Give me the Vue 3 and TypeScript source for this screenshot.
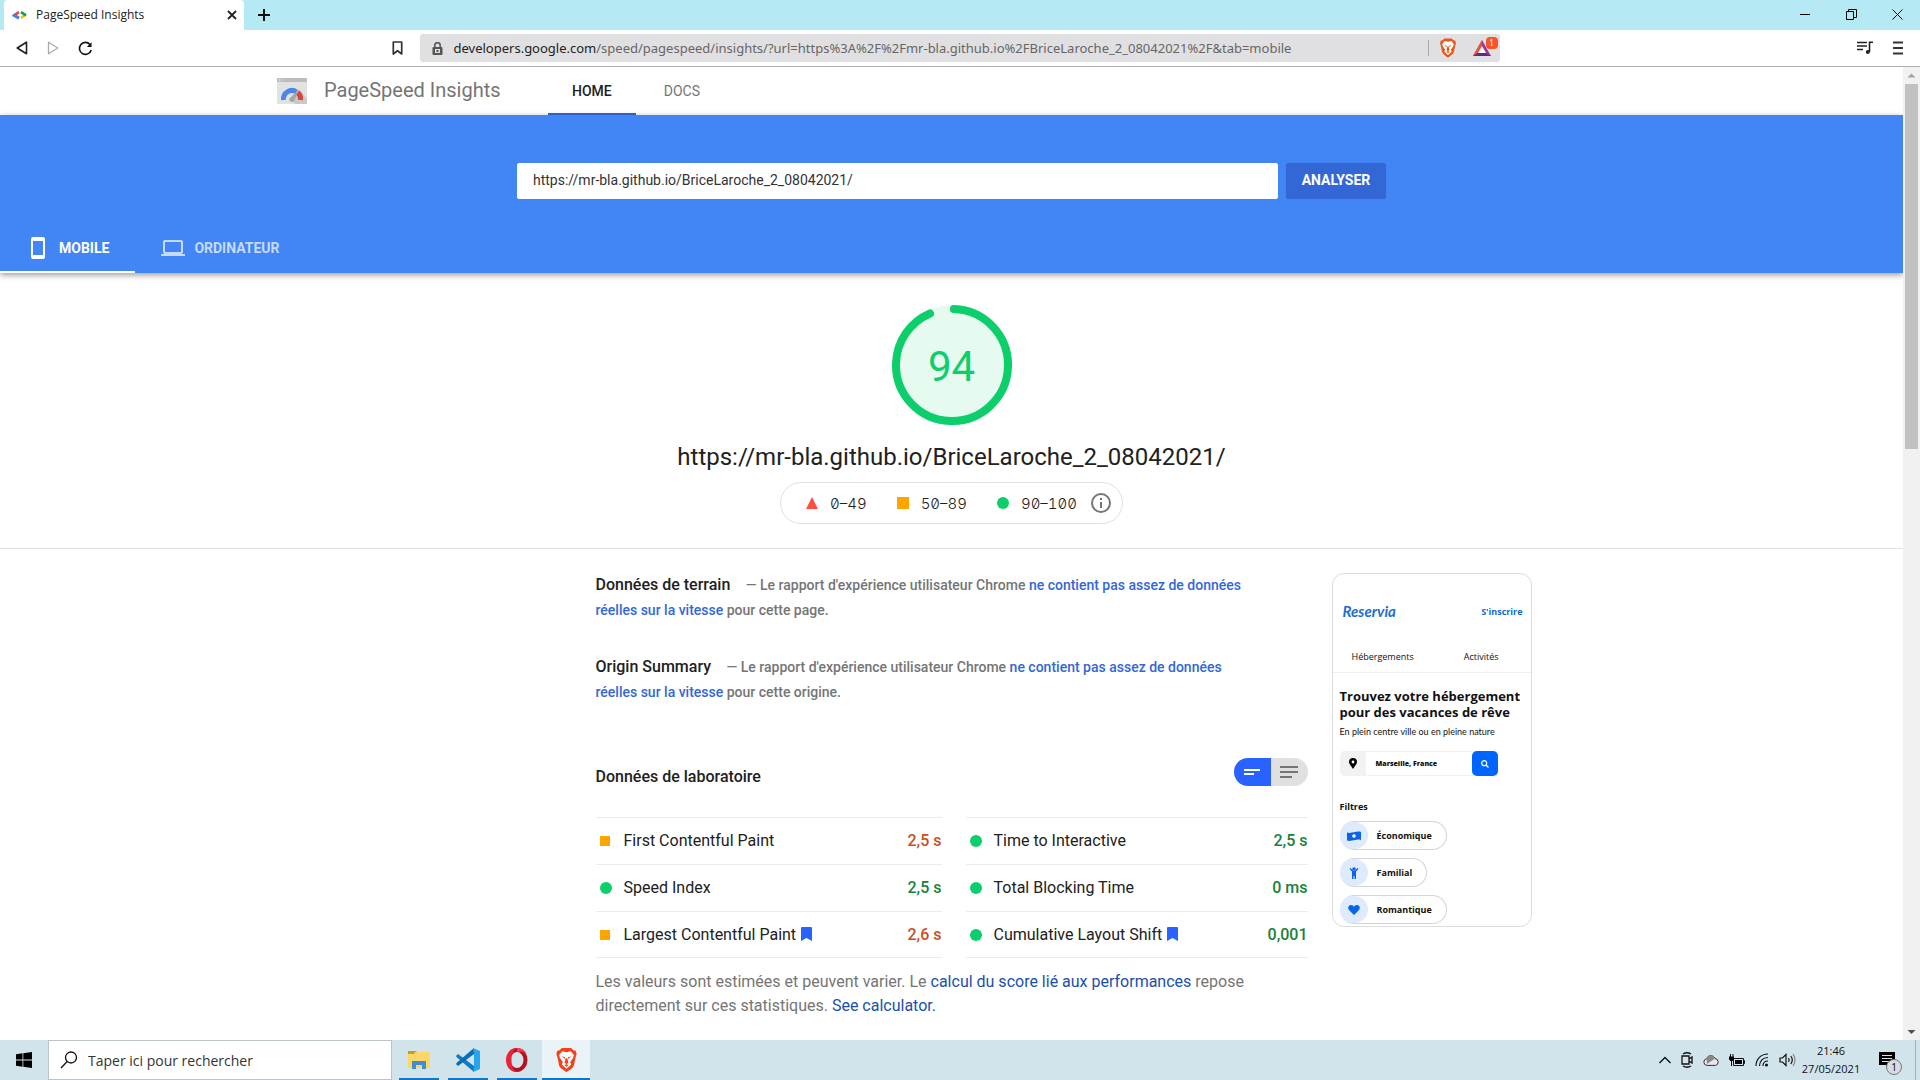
<script setup lang="ts">
import { ref } from 'vue'

interface Metric {
  name: string
  value: string
  status: 'average' | 'pass'
  vital?: boolean
}

const pageUrl = 'https://mr-bla.github.io/BriceLaroche_2_08042021/'
const query = ref(pageUrl)
const strategy = ref<'mobile' | 'desktop'>('mobile')
const taskSearch = ref('')

const score = 94
const radius = 56
const circumference = 2 * Math.PI * radius
const arc = `${(score / 100) * circumference - 4} ${circumference}`

const columns: Metric[][] = [
  [
    { name: 'First Contentful Paint', value: '2,5 s', status: 'average' },
    { name: 'Speed Index', value: '2,5 s', status: 'pass' },
    { name: 'Largest Contentful Paint', value: '2,6 s', status: 'average', vital: true },
  ],
  [
    { name: 'Time to Interactive', value: '2,5 s', status: 'pass' },
    { name: 'Total Blocking Time', value: '0 ms', status: 'pass' },
    { name: 'Cumulative Layout Shift', value: '0,001', status: 'pass', vital: true },
  ],
]

const fieldData = [
  { title: 'Données de terrain', end: 'pour cette page.' },
  { title: 'Origin Summary', end: 'pour cette origine.' },
]

const filters = [
  { label: 'Économique', icon: 'money' },
  { label: 'Familial', icon: 'child' },
  { label: 'Romantique', icon: 'heart' },
]
</script>

<template>
  <div class="desktop">
    <div class="titlebar">
      <div class="browser-tab">
        <svg class="favicon" width="16" height="12" viewBox="0 0 16 12" fill="none" stroke-width="2.600">
          <path d="M7 8.800 2.500 6" stroke="#4a7fe8" />
          <path d="M7 3.200 2 6.300" stroke="#e8453c" />
          <path d="M3.200 5.500 1.800 6.500 6.800 9.500" stroke="#4a7fe8" />
          <path d="M13.500 6 9 8.800" stroke="#f4c20d" />
          <path d="M9 3.200 14 6.300" stroke="#159a56" />
        </svg>
        <span class="tab-title">PageSpeed Insights</span>
        <button class="plain" aria-label="Fermer l'onglet">
          <svg width="10" height="10" viewBox="0 0 10 10"><path d="M1 1l8 8M9 1L1 9" stroke="#222" stroke-width="1.800" /></svg>
        </button>
      </div>
      <button class="plain new-tab" aria-label="Nouvel onglet">
        <svg width="12" height="12" viewBox="0 0 12 12"><path d="M6 0v12M0 6h12" stroke="#111" stroke-width="2" /></svg>
      </button>
      <div class="window-controls">
        <button class="plain" aria-label="Réduire"><svg width="11" height="11"><path d="M0 5.500h10" stroke="#000" /></svg></button>
        <button class="plain" aria-label="Restaurer">
          <svg width="11" height="11" fill="none" stroke="#000"><path d="M.5 2.500h7v8h-7zM2.500 2.500v-2h8v8h-3" /></svg>
        </button>
        <button class="plain" aria-label="Fermer"><svg width="11" height="11"><path d="M.5.5l10 10M10.500.5l-10 10" stroke="#000" /></svg></button>
      </div>
    </div>

    <div class="toolbar">
      <div class="history">
        <button class="plain" aria-label="Précédent">
          <svg width="12" height="14" fill="none" stroke="#222" stroke-width="1.600"><path d="M10.500 1.200v11.600L1.200 7z" stroke-linejoin="round" /></svg>
        </button>
        <button class="plain" aria-label="Suivant">
          <svg width="12" height="14" fill="none" stroke="#aaa" stroke-width="1.300"><path d="M1.500 1.200v11.600L10.800 7z" stroke-linejoin="round" /></svg>
        </button>
        <button class="plain" aria-label="Actualiser">
          <svg width="15" height="15" viewBox="0 0 15 15"><path d="M12 3.500A6 6 0 1 0 13.200 9" fill="none" stroke="#111" stroke-width="1.600" /><path d="M13.500 1.200v4.800H8.900z" fill="#111" /></svg>
        </button>
      </div>
      <button class="plain bookmark" aria-label="Ajouter aux favoris">
        <svg width="11" height="14" fill="none" stroke="#333" stroke-width="1.700"><path d="M1.300 1h8.400v12L5.500 9.800 1.300 13z" stroke-linejoin="round" /></svg>
      </button>
      <div class="omnibox">
        <svg width="11" height="13" viewBox="0 0 11 13"><rect y="5" x=".5" width="10" height="8" rx="1" fill="#555" /><path d="M2.800 5.500V3.400a2.700 2.700 0 0 1 5.400 0v2.100" fill="none" stroke="#555" stroke-width="1.500" /><rect x="3" y="7" width="5" height="4" fill="#e0e0e2" /><rect x="4.500" y="8" width="2" height="2" fill="#555" /></svg>
        <span class="address"><b>developers.google.com</b>/speed/pagespeed/insights/?url=https%3A%2F%2Fmr-bla.github.io%2FBriceLaroche_2_08042021%2F&amp;tab=mobile</span>
        <span class="omni-sep"></span>
        <svg width="16" height="20" viewBox="0 0 22 26">
          <path d="M6 0h10l2.500 2.500L21 3l1 3.500-1 3-2 9.500c-1 3-5.500 5.500-8 7-2.500-1.500-7-4-8-7L1 9.500l-1-3L1 3l2.500-.5z" fill="#e8581c" />
          <path d="M11 4.500l4.500-1 3.500 4-1 3.500-3 4 1 3-5 4.500-5-4.500 1-3-3-4L3 7.500l3.500-4z" fill="#fff" />
          <path d="M6 9l3.500 1-.5 2zM16 9l-3.500 1 .5 2zM10 11h2l1 5-2 1.500L9 16zM8.500 18.500l2.500-1 2.500 1-2.500 1.700z" fill="#e8581c" />
        </svg>
        <span class="rewards">
          <svg width="18" height="16" viewBox="0 0 18 16"><path d="M9 0 0 16h18z" fill="#9b3a94" /><path d="M9 0 0 16l5-3 4-7z" fill="#f0542d" /><path d="M0 16h18l-5-3H5z" fill="#5a2d83" /><path d="M9 6l-4 7h8z" fill="#fff" /></svg>
          <span class="rewards-count">1</span>
        </span>
      </div>
      <div class="toolbar-end">
        <button class="plain" aria-label="Contrôles multimédias">
          <svg width="16" height="14" viewBox="0 0 16 14" fill="none" stroke="#222" stroke-width="1.600"><path d="M0 1.500h10M0 5h10M0 8.500h6M12.500 11V1.200H16" /><circle cx="10.800" cy="11" r="2" fill="#222" stroke="none" /></svg>
        </button>
        <button class="plain" aria-label="Menu">
          <svg width="10" height="14"><path d="M0 1.500h10M0 7h10M0 12.500h10" stroke="#333" stroke-width="2" /></svg>
        </button>
      </div>
    </div>

    <div class="viewport">
      <div class="page">
        <header class="site-header">
          <svg width="30" height="26" viewBox="0 0 30 26">
            <rect width="30" height="26" rx="1" fill="#e2e2e2" /><path d="M0 1a1 1 0 0 1 1-1h28a1 1 0 0 1 1 1v3H0z" fill="#bdbdbd" />
            <path d="M2 2h1M4.500 2h1" stroke="#fff" />
            <path d="M14 21l9-9 7 9v5H18z" fill="#c9c9c9" />
            <path d="M6.500 22a8.500 8.500 0 0 1 13-8.200" fill="none" stroke="#4a86ee" stroke-width="5" />
            <path d="M20.500 14.500a8.500 8.500 0 0 1 3 7.500" fill="none" stroke="#d8453a" stroke-width="5" />
            <path d="M12.500 20.500 22 11.500 17.500 22a2.600 2.600 0 1 1-5-1.500z" fill="#a5a5a5" />
          </svg>
          <span class="product">PageSpeed Insights</span>
          <nav>
            <a href="#home" class="current">HOME</a>
            <a href="#docs">DOCS</a>
          </nav>
        </header>

        <section class="hero">
          <form class="url-form" @submit.prevent>
            <input v-model="query" type="text" aria-label="URL de la page Web" />
            <button type="submit">ANALYSER</button>
          </form>
          <div class="strategies" role="tablist">
            <button role="tab" :class="{ active: strategy === 'mobile' }" @click="strategy = 'mobile'">
              <svg width="14" height="22" viewBox="0 0 14 22"><path d="M2 0h10a2 2 0 0 1 2 2v18a2 2 0 0 1-2 2H2a2 2 0 0 1-2-2V2a2 2 0 0 1 2-2zm0 4v14h10V4z" fill="currentColor" fill-rule="evenodd" /></svg>
              MOBILE
            </button>
            <button role="tab" :class="{ active: strategy === 'desktop' }" @click="strategy = 'desktop'">
              <svg width="24" height="16" viewBox="0 0 24 16"><path d="M0 14h24v2H0zM4 0h16a2 2 0 0 1 2 2v10a2 2 0 0 1-2 2H4a2 2 0 0 1-2-2V2a2 2 0 0 1 2-2zm0 2v10h16V2z" fill="currentColor" fill-rule="evenodd" /></svg>
              ORDINATEUR
            </button>
          </div>
        </section>

        <section class="summary">
          <div class="gauge">
            <svg width="120" height="120" viewBox="0 0 120 120">
              <circle cx="60" cy="60" r="60" fill="#e6faf0" />
              <circle cx="60" cy="60" :r="radius" fill="none" stroke="#0cce6b" stroke-width="8" stroke-linecap="round" :stroke-dasharray="arc" transform="rotate(-88 60 60)" />
            </svg>
            <span class="score">{{ score }}</span>
          </div>
          <h1>{{ pageUrl }}</h1>
          <div class="scale">
            <span class="range"><svg width="12" height="12"><path d="M6 0l6 12H0z" fill="#ff4e42" /></svg>0–49</span>
            <span class="range"><svg width="12" height="12"><path d="M0 0h12v12H0z" fill="#ffa400" /></svg>50–89</span>
            <span class="range"><svg width="12" height="12"><circle cx="6" cy="6" r="6" fill="#0cce6b" /></svg>90–100</span>
            <button class="plain" aria-label="Informations">
              <svg width="20" height="20"><circle cx="10" cy="10" r="9" fill="none" stroke="#757575" stroke-width="2" /><path d="M10 5v2M10 9v6" stroke="#757575" stroke-width="2" /></svg>
            </button>
          </div>
        </section>

        <div class="report">
          <main>
            <section v-for="block in fieldData" :key="block.title" class="field">
              <h2>{{ block.title }}</h2>
              — Le rapport d'expérience utilisateur Chrome
              <a href="#crux">ne contient pas assez de données réelles sur la vitesse</a> {{ block.end }}
            </section>

            <div class="lab-head">
              <h2>Données de laboratoire</h2>
              <div class="view-toggle">
                <button class="on" aria-label="Vue condensée"><svg width="16" height="6"><path d="M0 1h16M0 5h10" stroke="#fff" stroke-width="2" /></svg></button>
                <button aria-label="Vue détaillée"><svg width="18" height="12"><path d="M0 1h18M0 6h18M0 11h12" stroke="#757575" stroke-width="2" /></svg></button>
              </div>
            </div>

            <div class="metrics">
              <table v-for="(column, i) in columns" :key="i">
                <tbody>
                  <tr v-for="metric in column" :key="metric.name">
                    <td class="marker"><span :class="metric.status"></span></td>
                    <th scope="row">
                      {{ metric.name }}<svg v-if="metric.vital" width="11" height="14"><path d="M1 0h9a1 1 0 0 1 1 1v13l-5.500-3L0 14V1a1 1 0 0 1 1-1z" fill="#2962ff" /></svg>
                    </th>
                    <td class="value" :class="metric.status">{{ metric.value }}</td>
                  </tr>
                </tbody>
              </table>
            </div>

            <p class="note">
              Les valeurs sont estimées et peuvent varier. Le
              <a href="#score">calcul du score lié aux performances</a> repose directement sur ces statistiques.
              <a href="#calculator">See calculator.</a>
            </p>
          </main>

          <aside class="preview">
            <div class="preview-top">
              <span class="brand">Reservia</span>
              <a href="#signup">S'inscrire</a>
            </div>
            <div class="preview-nav"><span>Hébergements</span><span>Activités</span></div>
            <div class="preview-body">
              <strong class="headline">Trouvez votre hébergement<br />pour des vacances de rêve</strong>
              <span class="tagline">En plein centre ville ou en pleine nature</span>
              <div class="preview-search">
                <span class="pin"><svg width="8" height="11" viewBox="0 0 8 11"><path d="M4 0a4 4 0 0 1 4 4c0 2-2 3.500-4 7C2 7.500 0 6 0 4a4 4 0 0 1 4-4z" /><circle cx="4" cy="4" r="1.400" fill="#fff" /></svg></span>
                <span class="city">Marseille, France</span>
                <span class="loupe"><svg width="8" height="8" viewBox="0 0 8 8" fill="none" stroke="#fff" stroke-width="1.200"><circle cx="3.200" cy="3.200" r="2.500" /><path d="M5 5l2.500 2.500" /></svg></span>
              </div>
              <strong class="filters-title">Filtres</strong>
              <div v-for="filter in filters" :key="filter.label" class="filter">
                <span class="filter-icon">
                  <svg v-if="filter.icon === 'money'" width="14" height="10" viewBox="0 0 14 10"><path d="M0 1.500c5 1.500 9-2 14-.5v8c-5-1.500-9 2-14 .5z" fill="#0b63e5" /><circle cx="7" cy="5" r="1.800" fill="#fff" /></svg>
                  <svg v-else-if="filter.icon === 'child'" width="10" height="12" viewBox="0 0 10 12"><circle cx="5" cy="2" r="1.800" fill="#0b63e5" /><path d="M1 1.500 4 4.500h2l3-3" fill="none" stroke="#0b63e5" stroke-width="1.400" /><path d="M3 4h4v8H5.500V9h-1v3H3z" fill="#0b63e5" /></svg>
                  <svg v-else width="12" height="10" viewBox="0 0 12 10"><path d="M6 10 1 5C-1 2.500 1 0 3 0c1.500 0 2.500.8 3 1.700C6.500.8 7.500 0 9 0c2 0 4 2.500 2 5z" fill="#0b63e5" /></svg>
                </span>
                {{ filter.label }}
              </div>
            </div>
          </aside>
        </div>
      </div>

      <div class="scrollbar">
        <svg width="17" height="17"><path d="M8.500 6.500l4 4h-8z" fill="#a3a3a3" /></svg>
        <span class="thumb"></span>
        <svg width="17" height="17"><path d="M8.500 11l-4-4h8z" fill="#505050" /></svg>
      </div>
    </div>

    <footer class="taskbar">
      <button class="plain start" aria-label="Démarrer">
        <svg width="16" height="16"><path d="M0 2.200 6.500 1.300v6.200H0zM7.300 1.200 16 0v7.500H7.300zM0 8.400h6.500v6.300L0 13.800zM7.300 8.400H16V16l-8.700-1.200z" /></svg>
      </button>
      <label class="task-search">
        <svg width="18" height="18" fill="none" stroke="#111" stroke-width="1.300"><circle cx="11" cy="6.500" r="5.500" /><path d="M7.200 10.500 1 17" /></svg>
        <input v-model="taskSearch" type="text" placeholder="Taper ici pour rechercher" aria-label="Rechercher" />
      </label>
      <div class="apps">
        <button class="app" aria-label="Explorateur de fichiers">
          <svg width="22" height="20" viewBox="0 0 22 20"><path d="M0 1h8l2 2h-3L6 5H0z" fill="#c99a1d" /><path d="M0 4h6l1-2h14a1 1 0 0 1 1 1v15H0z" fill="#fcd667" /><path d="M4 11h14v8h-4v-4H8v4H4z" fill="#3f8fcf" /></svg>
        </button>
        <button class="app" aria-label="Visual Studio Code">
          <svg width="24" height="24" viewBox="0 0 24 24"><path d="M0 8l2-2 16 12v6L1 9.500z" fill="#0f7bc4" /><path d="M0 16l2 2L18 6V0L1 14.500z" fill="#0a6cb4" /><path d="M17 0l7 3v18l-7 3c-.5-1 1-2 1-6V6c0-3-1.500-5-1-6z" fill="#27a5ec" /></svg>
        </button>
        <button class="app" aria-label="Opera">
          <svg width="24" height="24" viewBox="0 0 24 24"><ellipse cx="12" cy="12" rx="8.500" ry="10" fill="none" stroke="#b5121f" stroke-width="4" /><path d="M12 0C5 0 1 5.500 1 12s4 12 11 12c-3.500-1.500-5.500-6-5.500-12S8.500 1.500 12 0z" fill="#ea2438" /><path d="M12 0c5 0 8.500 2.500 10 7-2-3-5-4.500-10-3z" fill="#ea4450" /></svg>
        </button>
        <button class="app open" aria-label="Brave">
          <svg width="21" height="24" viewBox="0 0 22 26">
            <path d="M6 0h10l2.500 2.500L21 3l1 3.500-1 3-2 9.500c-1 3-5.500 5.500-8 7-2.500-1.500-7-4-8-7L1 9.500l-1-3L1 3l2.500-.5z" fill="#f4421b" />
            <path d="M11 4.500l4.500-1 3.500 4-1 3.500-3 4 1 3-5 4.500-5-4.500 1-3-3-4L3 7.500l3.500-4z" fill="#fff" />
            <path d="M6 9l3.500 1-.5 2zM16 9l-3.500 1 .5 2zM10 11h2l1 5-2 1.500L9 16zM8.500 18.500l2.500-1 2.500 1-2.500 1.700z" fill="#f4421b" />
          </svg>
        </button>
      </div>
      <div class="tray">
        <svg width="12" height="8" fill="none" stroke="#111" stroke-width="1.400"><path d="M.5 7 6 1.500 11.500 7" /></svg>
        <svg width="12" height="16" fill="none" stroke="#111" stroke-width="1.300"><path d="M1 4h7v8H1zM8 7l3-2v6L8 9M2 2q4-2.500 8 0M2 14q4 2.500 8 0" /></svg>
        <svg width="16" height="12" viewBox="0 0 16 12"><path d="M4 11.400a3.400 3.400 0 0 1-.5-6.700A4.500 4.500 0 0 1 12 4.500a3.500 3.500 0 0 1 .5 6.900z" fill="#e8e8e8" stroke="#333" /><path d="M3.500 4.700A4.500 4.500 0 0 1 12 4.500L4 10z" fill="#888" /></svg>
        <svg width="16" height="13" viewBox="0 0 16 13"><path d="M4.500 4.500h10v7h-10zM14.500 6.500h1v3h-1" fill="none" stroke="#111" /><path d="M6 6h7v4H6z" /><path d="M0 2.500h5v3L3.500 7h-2L0 5.500zM1 0h1v3H1zM3.500 0h1v3h-1zM2 7h1v5H2z" /></svg>
        <svg width="14" height="14" fill="none" stroke="#111" stroke-width="1.200"><path d="M1 13C1 6 6 1 13 1M4.500 13C4.500 8 8 4.500 13 4.500M8 13c0-3 2-5 5-5" /><circle cx="11.500" cy="12" r="1.500" fill="#111" stroke="none" /></svg>
        <svg width="17" height="14" fill="none" stroke="#111" stroke-width="1.200"><path d="M1 5h2.500L7 1.500v11L3.500 9H1zM9.500 5q1.500 2 0 4M11.800 3q3 4 0 8" /><path d="M14 1.200q4 5.800 0 11.600" stroke="#888" /></svg>
      </div>
      <div class="clock"><span>21:46</span><span>27/05/2021</span></div>
      <button class="plain notifications" aria-label="Notifications">
        <svg width="16" height="16"><path d="M0 0h16v13h-6l-3 3v-3H0z" /><path d="M3 3.500h10M3 6.500h10M3 9.500h7" stroke="#d3e4ea" /></svg>
        <span class="count">1</span>
      </button>
      <span class="show-desktop"></span>
    </footer>
  </div>
</template>

<style>
body {
  margin: 0;
  overflow: hidden;
}
</style>

<style scoped>
* {
  box-sizing: border-box;
}
.desktop {
  display: flex;
  flex-direction: column;
  height: 100vh;
  background: #fff;
  color: #212121;
  font-family: Roboto, sans-serif;
}
svg {
  flex: none;
  display: block;
}
a {
  text-decoration: none;
}
button {
  font-family: inherit;
}
.plain {
  display: flex;
  align-items: center;
  padding: 0;
  border: 0;
  background: none;
}
h1,
h2,
p {
  margin: 0;
}

/* Browser chrome */
.titlebar {
  display: flex;
  align-items: stretch;
  height: 30px;
  padding-left: 4px;
  background: #b5e9f3;
  font-family: "Open Sans", sans-serif;
}
.browser-tab {
  display: flex;
  align-items: center;
  width: 240px;
  padding: 0 7px 0 8px;
  border-radius: 4px 4px 0 0;
  background: #fff;
}
.tab-title {
  flex: 1;
  padding: 0 0 1px 8px;
  font-size: 12px;
}
.new-tab {
  margin-left: 14px;
}
.window-controls {
  display: flex;
  gap: 35px;
  margin-left: auto;
  padding: 0 17px 2px 0;
}
.toolbar {
  display: flex;
  align-items: center;
  height: 37px;
  padding: 0 17px 0 16px;
  border-bottom: 1px solid #aeaeae;
  font-family: "Noto Sans", sans-serif;
}
.history {
  display: flex;
  flex: 1;
  gap: 19px;
}
.bookmark {
  margin-right: 17px;
}
.omnibox {
  display: flex;
  align-items: center;
  width: 1080px;
  height: 28px;
  padding: 0 2px 0 12px;
  border-radius: 3px;
  background: #e0e0e2;
}
.address {
  flex: 1;
  padding-left: 11px;
  color: #666;
  font-size: 13px;
  white-space: nowrap;
}
.address b {
  color: #222;
  font-weight: 400;
}
.omni-sep {
  width: 1px;
  height: 16px;
  margin-right: 11px;
  background: #aaa;
}
.rewards {
  position: relative;
  margin-left: 17px;
  padding-right: 7px;
}
.rewards-count {
  position: absolute;
  top: -3px;
  right: 0;
  width: 12px;
  border-radius: 4px;
  background: #fb542b;
  color: #fff;
  font-size: 8px;
  line-height: 12px;
  text-align: center;
}
.toolbar-end {
  display: flex;
  flex: 1;
  justify-content: flex-end;
  gap: 20px;
  margin-left: 28px;
}

/* Page and scrollbar */
.viewport {
  display: flex;
  flex: 1;
  min-height: 0;
}
.page {
  flex: 1;
  min-width: 0;
  overflow: hidden;
}
.scrollbar {
  display: flex;
  flex-direction: column;
  width: 17px;
  background: #f1f1f1;
}
.thumb {
  height: calc(38% - 5px);
  margin: 0 2px auto;
  background: #c1c1c1;
}
.site-header {
  display: flex;
  align-items: center;
  height: 48px;
  padding-left: 277px;
}
.product {
  width: 241px;
  padding: 0 0 2px 17px;
  color: #757575;
  font-size: 20px;
}
nav {
  display: flex;
  align-self: stretch;
  gap: 4px;
}
nav a {
  display: flex;
  align-items: center;
  padding: 0 24px 1px;
  border: solid transparent;
  border-width: 2px 0;
  color: #757575;
  font-size: 14px;
}
nav .current {
  border-bottom-color: #3367d6;
  color: #212121;
  font-weight: 500;
}
.hero {
  position: relative;
  background: #4285f4;
  box-shadow: 0 2px 6px rgba(0, 0, 0, 0.4);
}
.url-form {
  display: flex;
  gap: 8px;
  width: 869px;
  margin: 0 auto;
  padding: 48px 0 24px;
}
.url-form input {
  flex: 1;
  height: 36px;
  padding: 0 16px 2px;
  border: 0;
  border-radius: 2px;
  color: #333;
  font: 14px Roboto, sans-serif;
}
.url-form button {
  width: 100px;
  padding: 0 0 2px;
  border: 0;
  border-radius: 2px;
  background: #3367d6;
  color: #fff;
  font-size: 14px;
  font-weight: 700;
}
.strategies {
  display: flex;
}
.strategies button {
  display: flex;
  align-items: center;
  gap: 9px;
  height: 50px;
  padding: 2px 26px 0;
  border: 0;
  border-bottom: 2px solid transparent;
  background: none;
  color: #c6dafc;
  font-size: 14px;
  font-weight: 700;
}
.strategies .active {
  gap: 14px;
  padding-left: 31px;
  border-bottom-color: #fff;
  color: #fff;
}

/* Score */
.summary {
  display: flex;
  flex-direction: column;
  align-items: center;
  padding: 32px 0 24px;
  border-bottom: 1px solid #e0e0e0;
}
.gauge {
  display: grid;
  place-items: center;
}
.gauge > * {
  grid-area: 1 / 1;
}
.score {
  padding-top: 4px;
  color: #0cce6b;
  font-size: 42px;
  line-height: 48px;
}
h1 {
  padding: 16px 0 9px;
  font-size: 24px;
  font-weight: 400;
  line-height: 32px;
}
.scale {
  display: flex;
  align-items: center;
  gap: 30px;
  height: 42px;
  padding: 0 11px 0 25px;
  border: 1px solid #e0e0e0;
  border-radius: 21px;
}
.range {
  display: flex;
  align-items: center;
  gap: 12px;
  font-family: Inter, sans-serif;
  font-size: 15px;
  font-weight: 300;
  font-feature-settings: "tnum", "zero";
}
.scale button {
  margin-left: -16px;
}

/* Report */
.report {
  display: flex;
  align-items: flex-start;
  gap: 24px;
  margin-left: calc(50% - 356px);
  padding-top: 24px;
}
main {
  width: 712px;
}
.field {
  max-width: 660px;
  margin-bottom: 32px;
  color: #757575;
  font-size: 14px;
  font-weight: 500;
  line-height: 25px;
}
h2 {
  color: #212121;
  font-size: 16px;
  font-weight: 500;
  line-height: 20px;
}
.field h2 {
  display: inline;
  padding-right: 12px;
}
.field a {
  color: #3367d6;
}
.lab-head {
  display: flex;
  align-items: flex-start;
  justify-content: space-between;
  padding-top: 21px;
}
.lab-head h2 {
  padding-top: 9px;
}
.view-toggle {
  display: flex;
  overflow: hidden;
  border-radius: 14px;
}
.view-toggle button {
  display: flex;
  align-items: center;
  justify-content: center;
  width: 37px;
  height: 28px;
  padding: 0;
  border: 0;
  background: #e0e0e0;
}
.view-toggle .on {
  background: #2962ff;
}
.metrics {
  display: grid;
  grid-template-columns: 346px 342px;
  gap: 24px;
  padding-top: 30px;
}
table {
  border-collapse: collapse;
}
td,
th {
  height: 47px;
  padding: 0;
  border-top: 1px solid #ebebeb;
  font-size: 16px;
  line-height: 24px;
}
tr:last-child > * {
  height: 46px;
  border-bottom: 1px solid #ebebeb;
}
th {
  font-weight: 400;
  text-align: left;
}
th svg {
  display: inline-block;
  margin-left: 5px;
  vertical-align: -1px;
}
.marker {
  width: 28px;
}
.marker span {
  display: block;
  width: 12px;
  height: 12px;
  margin-left: 4px;
  border-radius: 6px;
  background: #0cce6b;
}
.marker .average {
  width: 10px;
  height: 10px;
  border-radius: 0;
  background: #ffa400;
}
.value {
  font-weight: 500;
  text-align: right;
}
.value.average {
  color: #c7501b;
}
.value.pass {
  color: #178239;
}
.note {
  max-width: 680px;
  padding-top: 12px;
  color: #757575;
  font-size: 16px;
  line-height: 24px;
}
.note a {
  color: #1a4fad;
}

/* Mobile preview */
.preview {
  width: 200px;
  height: 354px;
  overflow: hidden;
  border: 1px solid #dadce0;
  border-radius: 12px;
  color: #111;
  font-family: "Open Sans", sans-serif;
}
.preview-top {
  display: flex;
  align-items: center;
  justify-content: space-between;
  height: 74px;
  padding: 0 8px 0 10px;
}
.brand {
  color: #1a6fd0;
  font-family: Lato, sans-serif;
  font-size: 15px;
  font-style: italic;
  font-weight: 700;
}
.preview-top a {
  color: #1268c9;
  font-size: 9px;
  font-weight: 700;
}
.preview-nav {
  display: flex;
  justify-content: space-between;
  padding: 2px 32px 8px 19px;
  border-bottom: 1px solid #eee;
  font-size: 9px;
  line-height: 14px;
}
.preview-body {
  display: flex;
  flex-direction: column;
  align-items: flex-start;
  padding: 15px 7px 0;
}
.headline {
  font-size: 13px;
  line-height: 16px;
  white-space: nowrap;
}
.tagline {
  padding-top: 5px;
  font-family: Lato, sans-serif;
  font-size: 9px;
  line-height: 14px;
}
.preview-search {
  display: flex;
  align-items: center;
  width: 158px;
  height: 25px;
  margin: 12px 0 25px;
  border-radius: 5px;
  box-shadow: inset 0 0 0 1px #f2f2f2;
}
.pin,
.loupe,
.filter-icon {
  display: flex;
  align-items: center;
  justify-content: center;
  align-self: stretch;
  width: 26px;
  border-radius: 5px 0 0 5px;
  background: #f2f2f2;
}
.city {
  flex: 1;
  padding-left: 10px;
  font-size: 7px;
  font-weight: 800;
}
.loupe {
  border-radius: 5px;
  background: #0065fc;
}
.filters-title {
  font-size: 9px;
  line-height: 12px;
}
.filter {
  display: flex;
  align-items: center;
  height: 29px;
  margin: 8px 0 0;
  padding-right: 14px;
  border: 1px solid #d5d5d5;
  border-left: 0;
  border-radius: 15px;
  font-size: 9px;
  font-weight: 700;
}
.filter-icon {
  width: 28px;
  margin-right: 9px;
  border-radius: 14px;
  background: #deebff;
}

/* Taskbar */
.taskbar {
  display: flex;
  align-items: center;
  height: 40px;
  background: #d2e4eb;
  color: #111;
  font-family: "Open Sans", sans-serif;
}
.start {
  justify-content: center;
  width: 48px;
}
.task-search {
  display: flex;
  align-items: center;
  align-self: stretch;
  gap: 10px;
  width: 344px;
  padding-left: 11px;
  border: 1px solid #bcc4c8;
  background: #fff;
}
.task-search input {
  flex: 1;
  min-width: 0;
  padding: 0;
  border: 0;
  outline: 0;
  font: 14px "Open Sans", sans-serif;
}
.task-search input::placeholder {
  color: #333;
  opacity: 1;
}
.apps {
  display: flex;
  align-self: stretch;
  gap: 9px;
  padding-left: 7px;
}
.app {
  display: flex;
  align-items: center;
  justify-content: center;
  width: 40px;
  padding: 2px 0 0;
  border: 0;
  border-bottom: 2px solid #0b78cc;
  background: none;
}
.app.open {
  width: 48px;
  margin-left: -4px;
  background: #eaf3f7;
}
.tray {
  display: flex;
  align-items: center;
  gap: 10px;
  margin-left: auto;
}
.clock {
  display: flex;
  flex-direction: column;
  width: 68px;
  margin-left: 1px;
  font-size: 11px;
  line-height: 18px;
  text-align: center;
}
.notifications {
  position: relative;
  margin-left: 14px;
}
.count {
  position: absolute;
  top: 7px;
  left: 7px;
  width: 16px;
  border: 1px solid #777;
  border-radius: 8px;
  background: #d8dde0;
  font-size: 10px;
  line-height: 14px;
  text-align: center;
}
.show-desktop {
  width: 5px;
  height: 40px;
  margin-left: 20px;
  border-left: 1px solid #9fb3bb;
}
</style>
